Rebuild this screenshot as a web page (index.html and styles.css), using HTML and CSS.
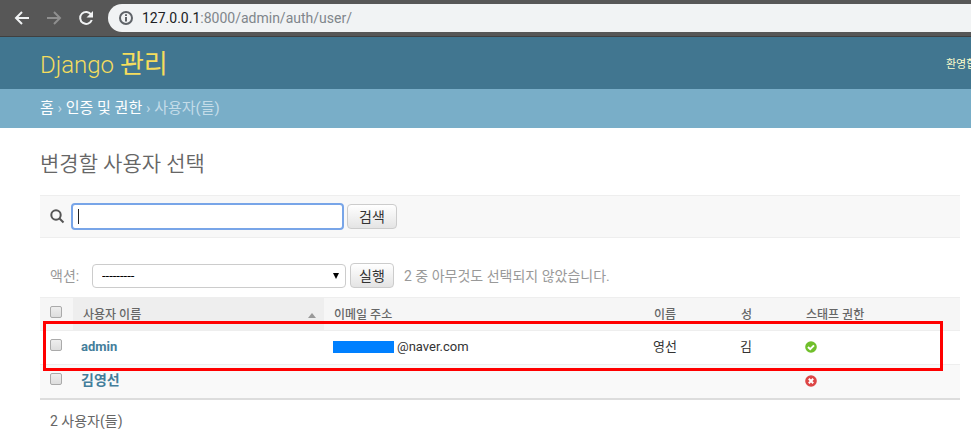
FILE: index.html
```html
<!DOCTYPE html>
<html lang="ko">
<head>
<meta charset="utf-8">
<title>변경할 사용자 선택 | Django 관리</title>
<link rel="stylesheet" href="styles.css">
</head>
<body>
<div class="browser-bar">
  <button class="nav-button" type="button" aria-label="뒤로"><svg viewBox="0 0 16 16"><path d="M15 8H2M8 2L2 8l6 6"/></svg></button>
  <button class="nav-button disabled" type="button" aria-label="앞으로" disabled><svg viewBox="0 0 16 16"><path d="M1 8h13M8 2l6 6-6 6"/></svg></button>
  <button class="nav-button" type="button" aria-label="새로고침"><svg viewBox="0 0 16 16"><path d="M13.2 4.6A6 6 0 1 0 13.8 10"/><path class="solid" d="M15 1v6.500H8.500z"/></svg></button>
  <div class="address">
    <svg class="info" viewBox="0 0 14 14"><circle cx="7" cy="7" r="6"/><path d="M7 6v4.500M7 3.300v1.700"/></svg>
    <span class="url"><b>127.0.0.1</b>:8000/admin/auth/user/</span>
  </div>
</div>
<header class="header">
  <a class="branding" href="#">Django <span class="branding-ko">관리</span></a>
  <div class="user-tools">환영합니다,</div>
</header>
<nav class="breadcrumbs"><a href="#">홈</a> › <a href="#">인증 및 권한</a> › 사용자(들)</nav>
<main class="content">
  <h1>변경할 사용자 선택</h1>
  <form class="toolbar">
    <label for="searchbar" aria-label="검색어"><svg class="search-icon" viewBox="0 0 15 15"><circle cx="6" cy="6" r="4.700"/><path d="M9.500 9.500l4 4"/></svg></label>
    <input class="searchbar" id="searchbar" type="text">
    <button class="button search-button" type="submit">검색</button>
  </form>
  <form class="actions">
    <label for="action">액션:</label>
    <span class="select-wrap"><select id="action"><option>---------</option></select></span>
    <button class="button run-button" type="submit">실행</button>
    <span class="counter">2 중 아무것도 선택되지 않았습니다.</span>
  </form>
  <div class="results">
    <table>
      <colgroup><col class="c-check"><col class="c-user"><col class="c-email"><col class="c-first"><col class="c-last"><col></colgroup>
      <thead>
        <tr>
          <th class="check"><input type="checkbox" aria-label="모두 선택"></th>
          <th class="sorted"><div class="sort-head">사용자 이름<i class="sort-arrow"></i></div></th>
          <th>이메일 주소</th><th>이름</th><th>성</th><th>스태프 권한</th>
        </tr>
      </thead>
      <tbody>
        <tr>
          <td class="check"><input type="checkbox" aria-label="admin"></td>
          <td class="name"><a href="#">admin</a></td>
          <td><div class="email"><i class="mask"></i>@naver.com</div></td>
          <td>영선</td><td>김</td>
          <td><svg class="status" viewBox="0 0 12 12" role="img" aria-label="예"><circle cx="6" cy="6" r="5.800" fill="#70bf2b"/><path d="M3 6l2.200 2.200L9 4.400" /></svg></td>
        </tr>
        <tr>
          <td class="check"><input type="checkbox" aria-label="김영선"></td>
          <td class="name"><a class="ko" href="#">김영선</a></td>
          <td></td><td></td><td></td>
          <td><svg class="status" viewBox="0 0 12 12" role="img" aria-label="아니요"><circle cx="6" cy="6" r="5.800" fill="#dd4646"/><path d="M3.800 3.800l4.400 4.400M8.200 3.800l-4.400 4.400"/></svg></td>
        </tr>
      </tbody>
    </table>
    <div class="highlight"></div>
  </div>
  <p class="paginator">2 사용자(들)</p>
</main>
</body>
</html>
```

FILE: styles.css
```css
* { box-sizing: border-box; }
body {
  margin: 0;
  background: #fff;
  color: #333;
  font: 13px/16px Roboto, "Noto Sans CJK KR", sans-serif;
  overflow: hidden;
}
a { text-decoration: none; }

.browser-bar {
  display: flex;
  align-items: center;
  height: 37px;
  padding-left: 14px;
  background: #575757;
  border-bottom: 1px solid #404040;
}
.nav-button {
  width: 16px;
  height: 16px;
  margin-right: 16px;
  padding: 0;
  border: 0;
  background: none;
}
.nav-button svg {
  display: block;
  width: 16px;
  height: 16px;
  fill: none;
  stroke: #f1f3f4;
  stroke-width: 2;
}
.nav-button .solid { fill: #f1f3f4; stroke: none; }
.nav-button.disabled svg { stroke: #8f8f8f; }
.address {
  flex: 1;
  display: flex;
  align-items: center;
  gap: 9px;
  height: 28px;
  margin-left: -2px;
  padding-left: 11px;
  border-radius: 14px 0 0 14px;
  background: #f1f3f4;
}
.info {
  width: 14px;
  height: 14px;
  fill: none;
  stroke: #5f6368;
  stroke-width: 2;
}
.url {
  font: 14px/20px Roboto, sans-serif;
  color: #80868b;
}
.url b { font-weight: 400; color: #202124; }

.header {
  display: flex;
  align-items: center;
  height: 52px;
  padding-left: 40px;
  background: #417690;
  overflow: hidden;
}
.branding {
  flex: 1;
  padding-top: 3px;
  color: #f5dd5d;
  font-size: 24px;
  font-weight: 300;
  line-height: 32px;
}
.branding-ko { font-size: 26px; font-weight: 400; }
.user-tools {
  flex: 0 0 25px;
  min-width: 0;
  padding-top: 3px;
  color: #ffc;
  font-size: 11px;
  white-space: nowrap;
}
.breadcrumbs {
  padding: 10px 40px;
  background: #79aec8;
  color: #c4dce8;
  font-size: 15px;
  line-height: 19px;
}
.breadcrumbs a { color: #fff; }

.content { padding: 20px 11px 0 40px; }
h1 {
  margin: 0 0 15px;
  color: #666;
  font-size: 21px;
  font-weight: 350;
  line-height: 32px;
}
.toolbar {
  display: flex;
  align-items: center;
  height: 43px;
  padding: 0 10px;
  border: solid #eee;
  border-width: 1px 0;
  background: #f8f8f8;
}
.search-icon {
  display: block;
  width: 15px;
  height: 15px;
  margin-right: 6px;
  fill: none;
  stroke: #555;
  stroke-width: 2;
}
.searchbar {
  width: 273px;
  height: 27px;
  margin-right: 3px;
  padding: 0 5px;
  border: 2px solid #78a5e8;
  border-radius: 4px;
  outline: 0;
  background: linear-gradient(#222, #222) 5px 4px / 1px 15px no-repeat #fff;
  font: inherit;
}
.button {
  height: 25px;
  padding: 0;
  border: 1px solid #ccc;
  border-radius: 4px;
  background: linear-gradient(#fff, #e4e4e4);
  color: #333;
  font: 14px/22px Roboto, "Noto Sans CJK KR", sans-serif;
}
.search-button { width: 50px; }
.run-button { width: 44px; margin-right: 10px; }
.actions {
  display: flex;
  align-items: center;
  height: 25px;
  margin: 25px 0 9px;
  padding-left: 10px;
  color: #999;
  font-size: 14px;
}
.actions label { width: 42px; }
.select-wrap { position: relative; margin-right: 4px; }
.select-wrap::after {
  content: "";
  position: absolute;
  top: 9px;
  right: 7px;
  border: solid transparent;
  border-width: 6px 3px 0;
  border-top-color: #000;
}
select {
  display: block;
  appearance: none;
  width: 254px;
  height: 24px;
  padding: 0 9px;
  border: 1px solid #ccc;
  border-radius: 4px;
  background: #fff;
  color: #000;
  font: 13px/20px Roboto, sans-serif;
}

.results { position: relative; }
table {
  width: 100%;
  table-layout: fixed;
  border-collapse: separate;
  border-spacing: 0;
}
.c-check { width: 33px; }
.c-user { width: 251px; }
.c-email { width: 320px; }
.c-first { width: 87px; }
.c-last { width: 65px; }
th {
  height: 34px;
  padding: 2px 10px 0;
  border: solid #eee;
  border-width: 1px 0;
  background: #f6f6f6;
  color: #666;
  font-size: 12px;
  font-weight: 500;
  text-align: left;
}
th.sorted { padding-right: 8px; background: #eee; }
.sort-head { display: flex; align-items: center; justify-content: space-between; }
.sort-arrow {
  border: solid transparent;
  border-width: 0 4px 5px;
  border-bottom-color: #999;
}
td {
  height: 34px;
  padding: 0 9px 2px;
  border-bottom: 1px solid #eee;
}
td.name { padding-left: 8px; }
td a { color: #447e9b; font-weight: 700; }
td a.ko { font-size: 14px; }
tbody tr:nth-child(2) td { height: 35px; background: #f9f9f9; border-bottom: 2px solid #ddd; }
th.check, td.check { padding: 0 0 4px 10px; }
td.check { padding-bottom: 6px; }
.check input {
  appearance: none;
  display: block;
  width: 12px;
  height: 12px;
  margin: 0;
  border: 1px solid #aaa;
  border-radius: 2px;
  background: linear-gradient(#eee, #ddd);
}
.email { display: flex; align-items: center; }
.mask { width: 61px; height: 12px; margin-right: 3px; background: #0080ff; }
.status {
  display: block;
  width: 12px;
  height: 12px;
  fill: none;
}
.status path { stroke: #fff; stroke-width: 2; }
.highlight {
  position: absolute;
  top: 24px;
  right: 17px;
  left: 3px;
  height: 50px;
  border: 3px solid #f00;
  pointer-events: none;
}
.paginator {
  margin: 0;
  padding: 13px 10px 0;
  color: #666;
  font-size: 14px;
}
```
